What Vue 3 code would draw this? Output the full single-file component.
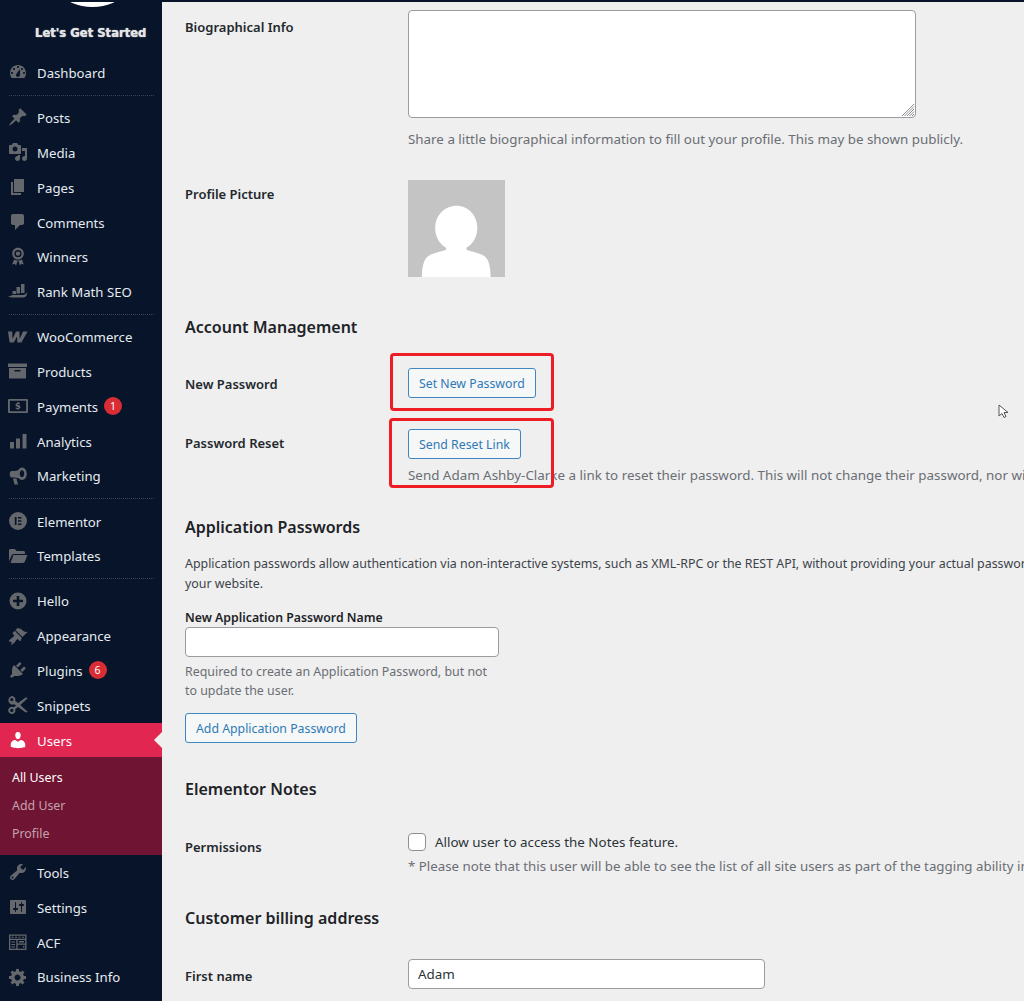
<script setup>
const menu = [
  { t: 'Dashboard', sep: true, d: 'M3.76 16h12.48c1.1-1.37 1.76-3.11 1.76-5 0-4.42-3.58-8-8-8s-8 3.58-8 8c0 1.89.66 3.63 1.76 5zM10 4c.55 0 1 .45 1 1s-.45 1-1 1-1-.45-1-1 .45-1 1-1zM6 6c.55 0 1 .45 1 1s-.45 1-1 1-1-.45-1-1 .45-1 1-1zm8 0c.55 0 1 .45 1 1s-.45 1-1 1-1-.45-1-1 .45-1 1-1zm-5.37 5.55L12 7v6c0 1.1-.9 2-2 2s-2-.9-2-2c0-.57.24-1.08.63-1.45zM4 10c.55 0 1 .45 1 1s-.45 1-1 1-1-.45-1-1 .45-1 1-1zm12 0c.55 0 1 .45 1 1s-.45 1-1 1-1-.45-1-1 .45-1 1-1z' },
  { t: 'Posts', d: 'M10.44 3.02l1.82-1.82 6.36 6.35-1.83 1.82c-1.05-.68-2.48-.57-3.41.36l-.75.75c-.92.93-1.04 2.35-.35 3.41l-1.83 1.82-2.41-2.41-2.8 2.79c-.42.42-3.38 2.71-3.8 2.29s1.86-3.39 2.28-3.81l2.79-2.79L4.1 9.36l1.83-1.82c1.05.69 2.48.57 3.4-.36l.75-.75c.93-.92 1.05-2.35.36-3.41z' },
  { t: 'Media', d: 'M13 11V4c0-.55-.45-1-1-1h-1.67L9 1H5L3.67 3H2c-.55 0-1 .45-1 1v7c0 .55.45 1 1 1h10c.55 0 1-.45 1-1zM7 4.5c1.38 0 2.5 1.12 2.5 2.5S8.38 9.5 7 9.5 4.5 8.38 4.5 7 5.62 4.5 7 4.5zM14 6h5v10.5c0 1.38-1.12 2.5-2.5 2.5S14 17.88 14 16.5s1.12-2.5 2.5-2.5c.17 0 .34.02.5.05V9h-3V6zm-4 8.05V13h2v3.5c0 1.38-1.12 2.5-2.5 2.5S7 17.88 7 16.5 8.12 14 9.5 14c.17 0 .34.02.5.05z' },
  { t: 'Pages', d: 'M6 15V2h10v13H6zm-1 1h8v2H3V5h2v11z' },
  { t: 'Comments', d: 'M5 2h9c1.1 0 2 .9 2 2v7c0 1.1-.9 2-2 2h-2l-5 5v-5H5c-1.1 0-2-.9-2-2V4c0-1.1.9-2 2-2z' },
  { t: 'Winners', d: 'M10 .8c3.300 0 5.800 2.600 5.800 5.800s-2.500 5.900-5.800 5.900-5.800-2.700-5.800-5.900S6.700.8 10 .8zm0 2.200a3.600 3.600 0 1 0 0 7.200A3.600 3.600 0 0 0 10 3zm0 1.400a2.200 2.200 0 1 1 0 4.400 2.200 2.200 0 0 1 0-4.400zM6 12.600c1.200.7 2.500 1 3.800 1l-1.800 5-1.300-1.800-2.500.7zm8 0c-1.200.7-2.500 1-3.800 1l1.800 5 1.300-1.800 2.500.7z', fr: true },
  { t: 'Rank Math SEO', sep: true, d: 'M13 3h3.500v9H13zM8.500 6H12v6.500H8.500zM4.500 10H8v3H4.500zM0 15.500c2-.2 3.500-1.600 5-1.600h10c1.500 0 3-1 4.500-3l-1 3.600c-.6 1.300-1.800 2-3.200 2H4.500C3 16.500 1.500 16 0 15.500z' },
  { t: 'WooCommerce', d: 'M0 4.500h4.200l.3 7.500L8 4.500h3.400l.3 7.600L15 4.500h4.600l-6.200 11h-4L9 9.400l-3.200 6.100H1.600z' },
  { t: 'Products', d: 'M0 2.500h19v3.600H0zM1 7h17v10.500H1zm5.500 2v1.600h6V9z', fr: true },
  { t: 'Payments', badge: 1, d: 'M1 3h18a1 1 0 0 1 1 1v12a1 1 0 0 1-1 1H1a1 1 0 0 1-1-1V4a1 1 0 0 1 1-1zm.9 1.800v10.400h16.200V4.800zM9.400 6v.9c-1.200.2-1.900.9-1.900 1.900 0 1.100.7 1.600 1.900 1.900.8.2 1 .4 1 .7s-.3.500-.9.500-1.100-.2-1.600-.6l-.4 1.100c.5.4 1.100.6 1.900.6v.9h1.100v-.9c1.200-.2 1.900-1 1.900-2 0-1.100-.6-1.600-1.900-2-.8-.2-1-.4-1-.7 0-.2.2-.4.8-.4.5 0 1 .1 1.400.4l.4-1.100c-.4-.3-1-.5-1.600-.6V6z', fr: true },
  { t: 'Analytics', d: 'M2 11h4v6.500H2zM8 7.500h4v10H8zM14.500 3h4v14.500h-4z' },
  { t: 'Marketing', sep: true, d: 'M14 1.500c2.600 0 4.800 2.700 4.800 6.200s-2.200 6.200-4.800 6.200c-1.200 0-2.400-.6-3.300-1.600-1.700-.8-4-.9-5-.9H3.500c-1 0-1.700-1-1.700-2.200V7.200c0-1.300.7-2.300 1.700-2.300h3c2.300 0 3.800-.7 4.400-1.600C11.800 2.200 12.900 1.500 14 1.500zm0 2.800c-1.200 0-2.200 1.500-2.200 3.400s1 3.400 2.200 3.400 2.200-1.500 2.200-3.400-1-3.400-2.200-3.400zM5 12.500h3.500l1.500 6H6.500z', fr: true },
  { t: 'Elementor', d: 'M10 1a9 9 0 1 1 0 18 9 9 0 0 1 0-18zM6.800 6v8h1.700V6zm3.200 0v1.600h3.400V6zm0 3.200v1.600h3.400V9.200zm0 3.200V14h3.400v-1.600z', fr: true },
  { t: 'Templates', sep: true, d: 'M1 4.500C1 3.700 1.700 3 2.500 3h4.300l1.800 2h7c.8 0 1.400.7 1.400 1.500V8H6c-1.100 0-2 .6-2.400 1.600L1 15.500zM5 9h14.500L16.800 15.800c-.3.700-.9 1.200-1.700 1.200H2.500l2.600-7z' },
  { t: 'Hello', d: 'M10 1.500a8.500 8.500 0 1 1 0 17 8.500 8.500 0 0 1 0-17zM8.700 5v3.700H5v2.600h3.700V15h2.600v-3.700H15V8.700h-3.700V5z', fr: true },
  { t: 'Appearance', d: 'M14.480 11.060L7.410 3.990l1.500-1.500c.5-.56 2.300-.47 3.510.32 1.210.8 1.430 1.280 2.910 2.100 1.180.64 2.450 1.260 4.450.85zm-.71.71L6.700 4.700 4.930 6.470c-.39.39-.39 1.020 0 1.410l1.060 1.060c.39.39.39 1.030 0 1.420-.6.6-1.430 1.110-2.210 1.690-.35.26-.7.53-1.010.84C1.430 13.230.4 14.850 1.100 15.550c.44.44 1.720.04 2.210.47.71.71.4 1.630-.38 2.280l-.2.16.05.04c.7.7 2.200-.33 3.540-1.660.31-.31.58-.66.84-1.010.58-.78 1.090-1.610 1.690-2.210.39-.39 1.030-.39 1.420 0l1.060 1.060c.39.39 1.020.39 1.410 0z' },
  { t: 'Plugins', badge: 6, d: 'M13.110 4.360L9.870 7.600 8 5.730l3.240-3.240c.35-.34 1.050-.2 1.560.32.52.51.66 1.210.31 1.550zm-8 1.770l.91-1.120 9.010 9.010-1.190.84c-.71.71-2.630 1.160-3.820 1.160H6.140L4.900 17.260c-.59.59-1.540.59-2.120 0-.59-.58-.59-1.530 0-2.120l1.240-1.240v-3.880c0-1.130.4-3.190 1.090-3.890zm7.260 3.970l3.240-3.240c.34-.35 1.040-.21 1.550.31.52.51.66 1.210.31 1.550l-3.240 3.250z' },
  { t: 'Snippets', d: 'M3.800 1a3.600 3.600 0 0 1 3.400 4.800l2.800 2.100 7-4.900c.9-.6 2-.5 2.700.3L12.300 10l7.400 6.700c-.7.800-1.800.9-2.700.3l-7-4.900-2.800 2.100A3.600 3.600 0 1 1 5.700 12.300l2.400-1.800-.7-.5-.7-.5-1 .0A3.600 3.600 0 1 1 3.800 1zm0 2a1.600 1.600 0 1 0 0 3.200 1.600 1.600 0 0 0 0-3.200zm0 10.800a1.600 1.600 0 1 0 0 3.200 1.600 1.600 0 0 0 0-3.200z', fr: true },
  { t: 'Users', active: true, d: 'M10 9.250c-2.270 0-2.730-3.440-2.730-3.440C7 4.020 7.820 2 9.970 2c2.160 0 2.980 2.020 2.710 3.810 0 0-.41 3.440-2.680 3.440zm0 2.570L12.720 10c2.390 0 4.520 2.330 4.520 4.530v2.490s-3.650 1.130-7.240 1.130c-3.650 0-7.240-1.130-7.240-1.130v-2.490c0-2.250 1.940-4.480 4.470-4.480z' },
  { t: 'Tools', d: 'M16.680 9.770c-1.340 1.340-3.300 1.670-4.950.99l-5.410 6.520c-.99.99-2.590.99-3.580 0s-.99-2.590 0-3.570l6.520-5.420c-.68-1.650-.35-3.610.99-4.950 1.280-1.280 3.120-1.620 4.720-1.060l-2.890 2.890 2.820 2.820 2.860-2.870c.53 1.580.18 3.390-1.080 4.650zM3.810 16.210c.4.39 1.040.39 1.430 0 .4-.4.4-1.040 0-1.430-.39-.4-1.030-.4-1.430 0-.39.39-.39 1.030 0 1.430z' },
  { t: 'Settings', d: 'M18 16V4c0-.55-.45-1-1-1H3c-.55 0-1 .45-1 1v12c0 .55.45 1 1 1h14c.55 0 1-.45 1-1zM8 11h1c.55 0 1 .45 1 1s-.45 1-1 1H8v1.500c0 .28-.22.5-.5.5s-.5-.22-.5-.5V13H6c-.55 0-1-.45-1-1s.45-1 1-1h1V5.500c0-.28.22-.5.5-.5s.5.22.5.5V11zm5-2h-1c-.55 0-1-.45-1-1s.45-1 1-1h1V5.500c0-.28.22-.5.5-.5s.5.22.5.5V7h1c.55 0 1 .45 1 1s-.45 1-1 1h-1v5.500c0 .28-.22.5-.5.5s-.5-.22-.5-.5V9z' },
  { t: 'ACF', d: 'M1 2.500h17.500V18H1zM2.300 3.800v2.900h14.900V3.800zM2.300 8v8.700h6V8zm7.300 0v3.500h7.600V8zm0 4.800v3.900h7.600v-3.900zM3.500 4.700h2v1h-2zm3.500 0h2v1H7zm3.500 0h2v1h-2zm3.500 0h2v1h-2zM3.500 9.500h3.500v1H3.500zm0 2.500h3.500v1H3.500zm0 2.500h3.500v1H3.500zM11 9h5v1.500h-5zm4 5h1.500v1.500H15z', fr: true },
  { t: 'Business Info', d: 'M18 12h-2.180c-.17.7-.44 1.350-.81 1.930l1.540 1.540-2.100 2.100-1.540-1.540c-.58.36-1.230.63-1.910.79V19H8v-2.180c-.68-.16-1.330-.43-1.910-.79l-1.540 1.540-2.120-2.120 1.540-1.540c-.36-.58-.63-1.230-.79-1.910H1V9.030h2.170c.16-.7.44-1.350.8-1.940L2.430 5.550l2.100-2.100 1.540 1.540c.58-.37 1.240-.64 1.930-.81V2h3v2.180c.68.16 1.330.43 1.910.79l1.540-1.540 2.120 2.120-1.540 1.540c.36.59.64 1.240.8 1.940H18V12zm-8.500 1.500c1.660 0 3-1.340 3-3s-1.340-3-3-3-3 1.340-3 3 1.340 3 3 3z' }
]
const sub = ['All Users', 'Add User', 'Profile']
</script>

<template>
  <div class="page">
    <aside class="side">
      <div class="logo">
        <span class="arc"></span>
        <span class="lets">Let's Get Started</span>
      </div>
      <ul class="menu">
        <template v-for="m in menu" :key="m.t">
          <li class="item" :class="{ active: m.active }">
            <svg class="ico" viewBox="0 0 20 20" width="20" height="20">
              <path :d="m.d" :fill-rule="m.fr ? 'evenodd' : 'nonzero'" />
            </svg>
            <span>{{ m.t }}</span>
            <b v-if="m.badge" class="badge">{{ m.badge }}</b>
          </li>
          <ul v-if="m.active" class="sub">
            <li v-for="(s, i) in sub" :key="s" :class="{ cur: i === 0 }">{{ s }}</li>
          </ul>
          <li v-if="m.sep" class="sep"></li>
        </template>
      </ul>
    </aside>

    <main class="main">
      <div class="row bio">
        <label class="lab">Biographical Info</label>
        <div class="field">
          <div class="textarea">
            <svg class="grip" viewBox="0 0 14 14" width="14" height="14"><path d="M1 13L13 1M3.500 13L13 3.500M6 13l7-7M8.500 13l4.500-4.500M11 13l2-2" /></svg>
          </div>
          <p class="desc">Share a little biographical information to fill out your profile. This may be shown publicly.</p>
        </div>
      </div>
      <div class="row pic">
        <label class="lab">Profile Picture</label>
        <div class="field">
          <svg class="avatar" viewBox="0 0 98 98" width="97" height="97">
            <rect width="98" height="98" fill="#c4c4c4" />
            <path fill="#fff" d="M49 26c12 0 21 10 21 22.500 0 9-4.500 16.500-11 20v2c7 3 17 3 21 9.500 2.500 4 3.500 11 3.500 18.500H14c0-7.500 1-14.500 3.500-18.500 4-6.500 14-6.500 21-9.500v-2c-6.500-3.500-11-11-11-20C27.500 36 37 26 49 26z" />
          </svg>
        </div>
      </div>

      <h2 class="h account">Account Management</h2>
      <div class="row np">
        <label class="lab">New Password</label>
        <div class="field"><button class="btn">Set New Password</button></div>
      </div>
      <div class="row pr">
        <label class="lab">Password Reset</label>
        <div class="field">
          <button class="btn">Send Reset Link</button>
          <p class="desc nowrap tight">Send Adam Ashby-Clarke a link to reset their password. This will not change their password, nor will it force a change.</p>
        </div>
      </div>

      <h2 class="h apps">Application Passwords</h2>
      <p class="intro">Application passwords allow authentication via non-interactive systems, such as XML-RPC or the REST API, without providing your actual password. Application passwords can be easily revoked.<br />your website.</p>
      <div class="appform">
        <label class="small">New Application Password Name</label>
        <div class="input wide"></div>
        <p class="hint">Required to create an Application Password, but not to update the user.</p>
        <button class="btn">Add Application Password</button>
      </div>

      <h2 class="h notes">Elementor Notes</h2>
      <div class="row perm">
        <label class="lab">Permissions</label>
        <div class="field">
          <div class="check"><span class="box"></span><span class="checktext">Allow user to access the Notes feature.</span></div>
          <p class="desc nowrap note">* Please note that this user will be able to see the list of all site users as part of the tagging ability in Notes.</p>
        </div>
      </div>

      <h2 class="h bill">Customer billing address</h2>
      <div class="row first">
        <label class="lab">First name</label>
        <div class="field"><div class="input name">Adam</div></div>
      </div>
    </main>

    <span class="mark m1"></span>
    <span class="mark m2"></span>
    <svg class="cursor" viewBox="0 0 12 16" width="12" height="16">
      <path d="M1 1v11l3-2.500 2 4 2-1-2-4h4z" fill="#fff" stroke="#555" stroke-width="1" />
    </svg>
  </div>
</template>

<style>
html, body { margin: 0; background: #efefef; }
</style>

<style scoped>
* { box-sizing: border-box; }
.page {
  position: relative;
  display: flex;
  width: 1024px;
  height: 1001px;
  overflow: hidden;
  background: #efefef;
  font-family: "Noto Sans", "Open Sans", sans-serif;
  font-size: 13.2px;
  color: #20262c;
  border-top: 2px solid #07142a;
}
.side {
  flex: 0 0 162px;
  margin-top: -2px;
  background: #07142a;
  color: #e6ebf0;
}
.logo { position: relative; height: 55px; }
.arc {
  position: absolute;
  left: 65px;
  top: -18px;
  width: 55px;
  height: 25px;
  border-radius: 50%;
  background: #fff;
}
.lets {
  position: absolute;
  left: 35px;
  top: 25.5px;
  font-family: "DejaVu Sans", sans-serif;
  font-weight: 700;
  font-size: 11.6px;
  line-height: 14px;
  color: #e4e4e4;
  white-space: nowrap;
  text-shadow: 0 0 1px #fff;
}
.menu, .sub { list-style: none; margin: 0; padding: 0; }
.item {
  display: flex;
  align-items: center;
  height: 34.8px;
  padding-left: 8px;
}
.item > span { margin-left: 9px; padding-top: 1.4px; }
.ico { flex: none; fill: #64676b; }
.badge {
  display: flex;
  align-items: center;
  justify-content: center;
  width: 18px;
  height: 18px;
  margin-left: 6px;
  border-radius: 50%;
  background: #d92d35;
  color: #fff;
  font-size: 10.5px;
  font-weight: 400;
}
.sep {
  height: 1px;
  margin: 5px 8px 4.3px 9px;
  border-top: 1px dotted #3a4352;
}
.item.active {
  position: relative;
  background: #e02651;
  color: #fff;
}
.item.active .ico { fill: #fff; }
.item.active::after {
  content: "";
  position: absolute;
  right: 0;
  top: 50%;
  margin-top: -8px;
  border: 8px solid transparent;
  border-right-color: #efefef;
  border-left-width: 0;
}
.sub {
  height: 97.6px;
  padding: 7px 0 7px 12px;
  background: #6f1432;
  color: #c5a1ae;
  font-size: 12.4px;
}
.sub li { height: 28px; line-height: 28px; }
.sub li.cur { color: #fff; }

.main { flex: 1; min-width: 0; padding-left: 23px; }
.row { display: flex; }
.lab {
  flex: 0 0 223px;
  font-weight: 600;
  font-size: 13px;
  line-height: 18px;
  color: #23282d;
}
.field { flex: 1; min-width: 0; }
.desc {
  margin: 0;
  font-size: 13.39px;
  line-height: 20px;
  color: #6a6e74;
}
.nowrap { white-space: nowrap; }
.bio { padding-top: 8px; }
.bio .lab { padding-top: 8px; }
.textarea {
  position: relative;
  width: 508px;
  height: 108px;
  border: 1px solid #9a9c9f;
  border-radius: 4px;
  background: #fff;
}
.grip {
  position: absolute;
  right: 0;
  bottom: 0;
  fill: none;
  stroke: #8c8f94;
  stroke-width: 1;
}
.bio .desc { margin-top: 11px; }
.pic { padding-top: 31px; }
.pic .lab { padding-top: 5px; }
.avatar { display: block; }
.h {
  margin: 0;
  font-size: 16px;
  font-weight: 600;
  line-height: 22px;
  color: #1d2327;
}
.account { margin-top: 39px; }
.np { margin-top: 30px; }
.np .lab { padding-top: 7px; }
.btn {
  display: block;
  height: 30px;
  padding: 0 10px;
  border: 1px solid #3f86c2;
  border-radius: 3px;
  background: #f6f7f7;
  color: #2f7ab8;
  font: inherit;
  font-size: 12.3px;
  white-space: nowrap;
}
.pr { margin-top: 31px; }
.pr .lab { padding-top: 5px; }
.tight { margin-top: 6px; }
.apps { margin-top: 31px; }
.intro {
  margin: 16px 0 0;
  width: 1200px;
  font-size: 12.4px;
  line-height: 20px;
  color: #3c434a;
}
.appform { margin-top: 15px; width: 314px; }
.small {
  display: block;
  font-size: 12.3px;
  font-weight: 600;
  line-height: 18px;
  color: #1d2327;
}
.input {
  height: 30px;
  border: 1px solid #9a9c9f;
  border-radius: 4px;
  background: #fff;
  font-size: 13.4px;
  line-height: 28px;
  padding-left: 9px;
  color: #2c3338;
}
.hint {
  margin: 5px 0 13px;
  font-size: 12.4px;
  line-height: 19px;
  color: #6a6e74;
}
.notes { margin-top: 35px; }
.perm { margin-top: 33px; }
.perm .lab { margin-top: 5px; }
.check { display: flex; align-items: center; height: 18px; }
.box {
  flex: none;
  width: 18px;
  height: 18px;
  border: 1px solid #8c8f94;
  border-radius: 4px;
  background: #fff;
  margin-right: 9px;
}
.checktext { font-size: 13.4px; color: #2c3338; white-space: nowrap; margin-top: -1px; }
.note { margin-top: 5px; font-size: 13.3px; }
.bill { margin-top: 31px; }
.first { margin-top: 30px; }
.first .lab { padding-top: 8px; }
.name { width: 357px; }

.mark {
  position: absolute;
  border: 3px solid #ee1c25;
  border-radius: 4px;
}
.m1 { left: 390px; top: 351px; width: 164px; height: 58px; }
.m2 { left: 389px; top: 416px; width: 165px; height: 70px; }
.cursor { position: absolute; left: 998px; top: 402px; }
</style>
